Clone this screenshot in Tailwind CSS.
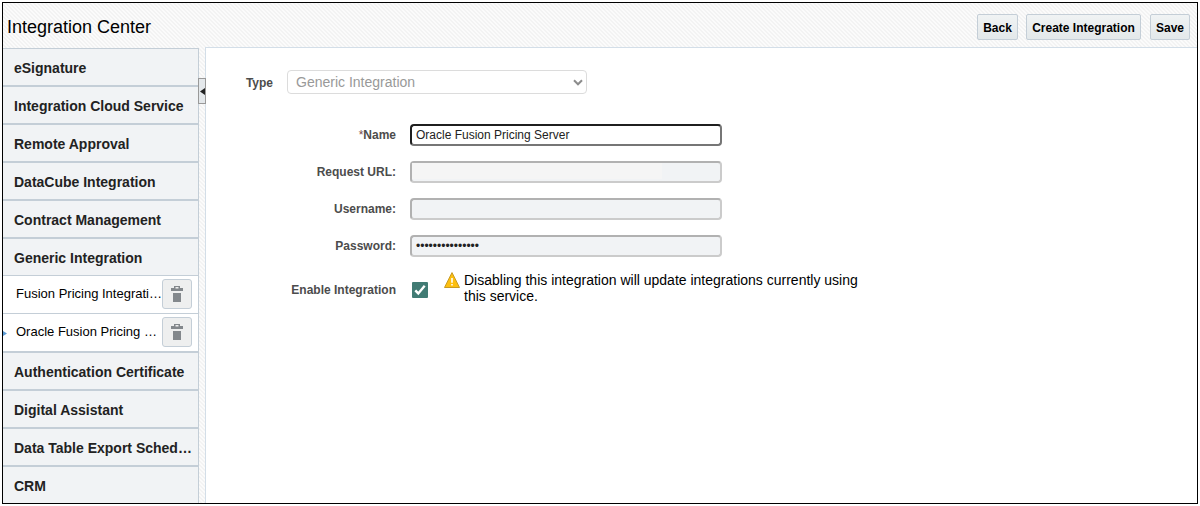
<!DOCTYPE html>
<html lang="en">
  <head>
    <meta charset="UTF-8" />
    <meta name="viewport" content="width=device-width, initial-scale=1.0" />
    <title>Integration Center</title>
    <script src="https://cdn.jsdelivr.net/npm/@tailwindcss/browser@4"></script>
    <style>
      body {
        font-family: "Liberation Sans", Arial, sans-serif;
      }
      .hatched {
        background: repeating-linear-gradient(45deg, #fbfbfb 0 1.414px, #f3f3f3 1.414px 2.828px);
      }
    </style>
  </head>
  <body class="h-screen overflow-hidden bg-white p-[2px] text-black">
    <div class="hatched flex h-[502px] w-[1196px] flex-col border border-black">
      <!-- Top bar -->
      <header class="flex h-11 shrink-0 items-center justify-between pr-[7px] pl-1">
        <h1 class="pt-1 text-[18px] leading-6">Integration Center</h1>
        <div class="flex gap-2 pt-1 text-xs font-bold">
          <button class="h-[26px] w-[41px] rounded-[2px] border border-[#c4ced7] bg-linear-to-b from-[#f0f3f4] to-[#e3e8ea] pt-[1px]">Back</button>
          <button class="h-[26px] w-[115px] rounded-[2px] border border-[#c4ced7] bg-linear-to-b from-[#f0f3f4] to-[#e3e8ea] pt-[1px]">Create Integration</button>
          <button class="ml-[1px] h-[26px] w-10 rounded-[2px] border border-[#c4ced7] bg-linear-to-b from-[#f0f3f4] to-[#e3e8ea] pt-[1px]">Save</button>
        </div>
      </header>

      <div class="flex min-h-0 flex-1">
        <!-- Sidebar -->
        <aside class="relative mt-[1px] w-[196px] shrink-0 border-t border-r border-[#c4ced7] bg-[#f1f3f5]">
          <nav class="h-full overflow-hidden text-sm font-bold text-[#222]">
            <div class="flex h-[38px] items-center border-b-2 border-[#c4ced7] pt-[2px] pl-[11px]">eSignature</div>
            <div class="flex h-[38px] items-center border-b-2 border-[#c4ced7] pt-[2px] pl-[11px]">Integration Cloud Service</div>
            <div class="flex h-[38px] items-center border-b-2 border-[#c4ced7] pt-[2px] pl-[11px]">Remote Approval</div>
            <div class="flex h-[38px] items-center border-b-2 border-[#c4ced7] pt-[2px] pl-[11px]">DataCube Integration</div>
            <div class="flex h-[38px] items-center border-b-2 border-[#c4ced7] pt-[2px] pl-[11px]">Contract Management</div>
            <div class="flex h-[37px] items-center border-b border-[#c4ced7] pt-[2px] pl-[11px]">Generic Integration</div>

            <!-- Integrations of the open group -->
            <div class="flex h-[38px] items-center border-b border-[#c4ced7] bg-white pb-[1px] pl-[13px] text-[13px] font-normal text-black">
              <span class="w-[146px] leading-4 whitespace-nowrap">Fusion Pricing Integrati…</span>
              <button class="flex h-[30px] w-[30px] shrink-0 items-center justify-center rounded-[3px] border border-[#c4ced7] bg-[#eeefef]">
                <svg class="h-4 w-3" viewBox="0 0 12 16" fill="#83888c">
                  <path fill-rule="evenodd" d="M3 0h6v2h3v3H0V2h3zM4.500 1v1.500h3V1z" />
                  <path d="M2 7h8v9H2z" />
                </svg>
              </button>
            </div>
            <div class="flex h-[39px] items-center border-b-2 border-[#c4ced7] bg-white pb-[1px] text-[13px] font-normal text-black">
              <svg class="mt-[3px] mr-[9px] h-[5px] w-1" viewBox="0 0 4 5" fill="#5b9bd5"><path d="M0 0l4 2.500L0 5z" /></svg>
              <span class="w-[146px] leading-4 whitespace-nowrap">Oracle Fusion Pricing …</span>
              <button class="flex h-[30px] w-[30px] shrink-0 items-center justify-center rounded-[3px] border border-[#c4ced7] bg-[#eeefef]">
                <svg class="h-4 w-3" viewBox="0 0 12 16" fill="#83888c">
                  <path fill-rule="evenodd" d="M3 0h6v2h3v3H0V2h3zM4.500 1v1.500h3V1z" />
                  <path d="M2 7h8v9H2z" />
                </svg>
              </button>
            </div>

            <div class="flex h-[38px] items-center border-b-2 border-[#c4ced7] pt-[2px] pl-[11px]">Authentication Certificate</div>
            <div class="flex h-[38px] items-center border-b-2 border-[#c4ced7] pt-[2px] pl-[11px]">Digital Assistant</div>
            <div class="flex h-[38px] items-center border-b-2 border-[#c4ced7] pt-[2px] pl-[11px]">Data Table Export Sched…</div>
            <div class="flex h-9 items-center pt-[2px] pl-[11px]">CRM</div>
          </nav>
          <!-- Collapse handle -->
          <button class="absolute top-[29px] -right-2 flex h-[26px] w-2 items-center justify-center border border-[#999] bg-[#e4e8eb]">
            <svg class="h-[7px] w-[5px] shrink-0" viewBox="0 0 5 7" fill="#222"><path d="M5 0v7L0 3.500z" /></svg>
          </button>
        </aside>

        <!-- Integration form -->
        <main class="ml-[6px] flex-1 border-t border-l border-[#d3dee8] bg-white pt-[22px]">
          <div class="flex items-center">
            <label class="w-[67px] pt-[1px] text-right text-xs font-bold text-[#4c4c4c]">Type</label>
            <div class="ml-[14px] flex h-6 w-[300px] items-center justify-between rounded-[4px] border border-[#dcdcdc] pr-[3px] pl-2 text-sm text-[#999]">
              <span>Generic Integration</span>
              <svg class="h-[7px] w-[10px]" viewBox="0 0 10 7" fill="none" stroke="#8c8c8c" stroke-width="2"><path d="M1 1.300l4 4 4-4" /></svg>
            </div>
          </div>

          <div class="mt-[30px] grid grid-cols-[190px_312px] items-center gap-x-[14px] gap-y-[15px] text-xs">
            <label class="text-right font-bold text-[#4c4c4c]"><span class="font-normal text-[#7a4a4a]">*</span>Name</label>
            <div class="h-[22px] rounded-[4px] border-2 border-t-[#1f1f1f] border-r-[#767676] border-b-[#767676] border-l-[#1f1f1f] bg-white pl-1 leading-[18px] text-[#222]">Oracle Fusion Pricing Server</div>

            <label class="text-right font-bold text-[#4c4c4c]">Request URL:</label>
            <div class="h-[22px] rounded-[4px] border-2 border-t-[#b1b1b1] border-r-[#cbcbcb] border-b-[#cbcbcb] border-l-[#b1b1b1] bg-[#f1f3f5]">
              <div class="h-4 w-[250px] bg-[#f5f5f5]"></div>
            </div>

            <label class="text-right font-bold text-[#4c4c4c]">Username:</label>
            <div class="h-[22px] rounded-[4px] border-2 border-t-[#b1b1b1] border-r-[#cbcbcb] border-b-[#cbcbcb] border-l-[#b1b1b1] bg-[#f1f3f5]"></div>

            <label class="text-right font-bold text-[#4c4c4c]">Password:</label>
            <div class="flex h-[22px] items-center rounded-[4px] border-2 border-t-[#b1b1b1] border-r-[#cbcbcb] border-b-[#cbcbcb] border-l-[#b1b1b1] bg-[#f1f3f5] pl-1 leading-[18px] text-[#222]">•••••••••••••••</div>
          </div>

          <div class="mt-[15px] flex items-start">
            <label class="w-[190px] pt-[10px] text-right text-xs font-bold text-[#4c4c4c]">Enable Integration</label>
            <div class="mt-[10px] ml-4 h-4 w-4 rounded-[1px] bg-[#417b74]">
              <svg class="h-4 w-4" viewBox="0 0 16 16" fill="none" stroke="#fff" stroke-width="2.400"><path d="M3.300 8.300l3 3.100 6.400-7.600" /></svg>
            </div>
            <svg class="ml-4 h-4 w-4" viewBox="0 0 16 16">
              <path d="M8 .6L15.500 15.500H.5z" fill="#fdbf0f" stroke="#c79a22" stroke-linejoin="round" />
              <path d="M7.200 6h1.600v4.800H7.200zM7.200 12h1.600v1.600H7.200z" fill="#fff" />
            </svg>
            <p class="ml-1 w-[405px] text-sm leading-4">Disabling this integration will update integrations currently using this service.</p>
          </div>
        </main>
      </div>
    </div>
  </body>
</html>
